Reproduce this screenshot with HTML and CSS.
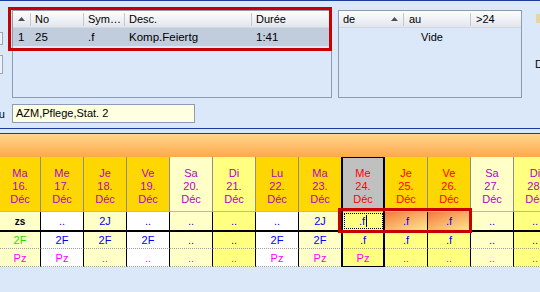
FILE: index.html
```html
<!DOCTYPE html>
<html lang="fr">
<head>
  <meta charset="UTF-8" />
  <title>Planning</title>
  <link rel="stylesheet" href="styles.css">
</head>
<body>

  <div class="topline"></div>

  <!-- Zone du haut : listes -->
  <div class="top">
    <div class="top-row">
      <div class="side-left">
        <div class="stub stub-a"></div>
        <div class="stub stub-b"></div>
      </div>

      <div class="list list-main">
        <div class="list-head">
          <div class="col c-sort"><svg width="7" height="4" viewBox="0 0 7 4"><polygon points="0,4 3.5,0 7,4" fill="#4a4f58"/></svg></div>
          <div class="col c-no sep">No</div>
          <div class="col c-sym sep">Sym…</div>
          <div class="col c-desc sep">Desc.</div>
          <div class="col c-dur sep">Durée</div>
        </div>
        <div class="list-row selected">
          <div class="col c-sort">1</div>
          <div class="col c-no">25</div>
          <div class="col c-sym">.f</div>
          <div class="col c-desc">Komp.Feiertg</div>
          <div class="col c-dur">1:41</div>
        </div>
      </div>

      <div class="list list-range">
        <div class="list-head">
          <div class="col c-de">de <svg width="7" height="4" viewBox="0 0 7 4"><polygon points="0,4 3.5,0 7,4" fill="#4a4f58"/></svg></div>
          <div class="col c-au sep">au</div>
          <div class="col c-gt sep">&gt;24</div>
        </div>
        <div class="empty">Vide</div>
      </div>

      <div class="side-right">
        <div class="icon-stub"></div>
        <div class="clip"><span>Du</span></div>
      </div>
    </div>

    <div class="note-row">
      <div class="clip clip-left"><span>au</span></div>
      <div class="note">AZM,Pflege,Stat. 2</div>
    </div>

    <div class="mark mark-list"></div>
  </div>

  <div class="blueline"></div>
  <div class="gap"></div>
  <div class="blueline"></div>
  <div class="band"></div>

  <!-- Planning -->
  <div class="sched">
    <div class="grid">
      <div class="hd wk">Ma<br>16.<br>Déc</div>
      <div class="hd wk">Me<br>17.<br>Déc</div>
      <div class="hd wk">Je<br>18.<br>Déc</div>
      <div class="hd wk">Ve<br>19.<br>Déc</div>
      <div class="hd sa">Sa<br>20.<br>Déc</div>
      <div class="hd di">Di<br>21.<br>Déc</div>
      <div class="hd wk">Lu<br>22.<br>Déc</div>
      <div class="hd wk">Ma<br>23.<br>Déc</div>
      <div class="hd cur red">Me<br>24.<br>Déc</div>
      <div class="hd wk red">Je<br>25.<br>Déc</div>
      <div class="hd wk red">Ve<br>26.<br>Déc</div>
      <div class="hd sa">Sa<br>27.<br>Déc</div>
      <div class="hd di">Di<br>28.<br>Déc</div>

      <div class="cell r1 lt blk">zs</div>
      <div class="cell r1 wh">..</div>
      <div class="cell r1 lt">2J</div>
      <div class="cell r1 wh">..</div>
      <div class="cell r1 lt">..</div>
      <div class="cell r1 ye">..</div>
      <div class="cell r1 wh">..</div>
      <div class="cell r1 lt">2J</div>
      <div class="cell r1 ye"><span class="focus">.f<i class="caret"></i></span></div>
      <div class="cell r1 hot">.f</div>
      <div class="cell r1 hot">.f</div>
      <div class="cell r1 lt">..</div>
      <div class="cell r1 ye">..</div>

      <div class="cell r2 lt grn">2F</div>
      <div class="cell r2 wh">2F</div>
      <div class="cell r2 lt">2F</div>
      <div class="cell r2 wh">2F</div>
      <div class="cell r2 lt">..</div>
      <div class="cell r2 ye">..</div>
      <div class="cell r2 wh">2F</div>
      <div class="cell r2 lt">2F</div>
      <div class="cell r2 ye">.f</div>
      <div class="cell r2 ye">.f</div>
      <div class="cell r2 ye">.f</div>
      <div class="cell r2 lt">..</div>
      <div class="cell r2 ye">..</div>

      <div class="cell r3 lt">Pz</div>
      <div class="cell r3 wh">Pz</div>
      <div class="cell r3 lt">..</div>
      <div class="cell r3 wh">..</div>
      <div class="cell r3 lt">..</div>
      <div class="cell r3 ye">..</div>
      <div class="cell r3 wh">Pz</div>
      <div class="cell r3 lt">Pz</div>
      <div class="cell r3 ye">Pz</div>
      <div class="cell r3 ye">..</div>
      <div class="cell r3 ye">..</div>
      <div class="cell r3 lt">..</div>
      <div class="cell r3 ye">..</div>
    </div>

    <div class="sel-col"></div>
    <div class="mark mark-grid"></div>
  </div>

</body>
</html>
```

FILE: styles.css
```css
/* === BASE === */
* { margin: 0; padding: 0; box-sizing: border-box; }

:root {
  --bg: #dae8f9;
  --navy: #1e3d9b;
  --frame: #8c9cb2;
  --mark: #c80000;
  --gold: #ffd700;
  --cream: #ffffc8;
  --yellow: #ffff80;
}

body {
  width: 540px;
  height: 292px;
  overflow: hidden;
  background: var(--bg);
  font-family: 'Liberation Sans', Arial, sans-serif;
  font-size: 11px;
  color: #000;
}

.topline { height: 1px; background: var(--navy); }

/* === ZONE DU HAUT === */
.top {
  position: relative;
  height: 127px;
  padding-top: 9px;
}

.top-row { display: flex; height: 88px; }

.side-left {
  width: 12px;
  display: flex;
  flex-direction: column;
}

.stub {
  width: 3px;
  background: #eef2f6;
  border: 1px solid #9aa6b6;
  border-left: none;
}
.stub-a { height: 13px; margin-top: 22px; }
.stub-b { height: 19px; margin-top: 10px; }

.list {
  height: 88px;
  border: 1px solid var(--frame);
}
.list-main { width: 320px; }
.list-range { width: 184px; margin-left: 6px; }

.list-head {
  display: flex;
  align-items: center;
  height: 17px;
  background: linear-gradient(#fdfdfe, #e2e6ec);
  border-bottom: 1px solid #d2d8e0;
}

.col {
  height: 13px;
  line-height: 13px;
  padding-left: 4px;
  white-space: nowrap;
  border-left: 1px solid transparent;
}
.list-head .sep { border-left-color: #c3c8d0; }

.c-sort { width: 17px; padding-left: 5px; border-left: none; }
.c-sort svg { margin-bottom: 2px; }
.c-no { width: 53px; }
.c-sym { width: 41px; }
.c-desc { width: 127px; }
.c-dur { flex: 1; }

.c-de { width: 64px; border-left: none; display: flex; align-items: center; }
.c-de svg { margin-left: auto; margin-right: 5px; }
.c-au { width: 67px; padding-left: 5px; }
.c-gt { flex: 1; padding-left: 5px; }

.list-row {
  display: flex;
  align-items: center;
  height: 18px;
}
.list-row .col { font-size: 11.5px; }
.list-row.selected { background: #c1ccdd; }

.empty {
  text-align: center;
  padding-top: 3px;
  padding-left: 4px;
}

.side-right {
  margin-left: 13px;
  width: 5px;
  overflow: hidden;
}

.icon-stub {
  width: 8px;
  height: 9px;
  margin: 4px 0 0 1px;
  background: #e6d6a4;
}

.clip {
  display: flex;
  justify-content: flex-end;
  overflow: hidden;
  white-space: nowrap;
}
.side-right .clip { width: 12px; margin-top: 35px; justify-content: flex-start; }

.note-row {
  display: flex;
  align-items: center;
  margin-top: 6px;
}

.clip-left { width: 12px; }
.clip-left span { margin-right: 7px; }

.note {
  width: 183px;
  height: 19px;
  line-height: 17px;
  padding-left: 3px;
  background: #ffffe1;
  border: 1px solid var(--frame);
}

.mark {
  position: absolute;
  border: 3px solid var(--mark);
}
.mark-list { left: 8px; top: 6px; width: 324px; height: 44px; }

.blueline { height: 1px; background: var(--navy); }
.gap { height: 4px; }

.band {
  height: 23px;
  background: linear-gradient(#ffd68c, #ffa84c);
}

/* === PLANNING === */
.sched {
  position: relative;
  width: 540px;
  overflow: hidden;
}

.grid {
  display: grid;
  grid-template-columns: 41px repeat(12, 43px);
  width: 557px;
}

.hd {
  height: 55px;
  padding-top: 10px;
  line-height: 13px;
  text-align: center;
  color: #b400c8;
  border-right: 1px solid #8e8e8e;
  border-bottom: 1px solid #b8b8b8;
}
.hd.wk { background: var(--gold); }
.hd.sa { background: var(--cream); }
.hd.di { background: var(--yellow); }
.hd.cur { background: #c0c0c0; }
.hd.red { color: #ff0000; }

.cell {
  display: flex;
  align-items: center;
  justify-content: center;
  color: #0000ff;
  border-right: 1px solid #000;
}
.cell.r1 { height: 20px; border-bottom: 2px solid #000; }
.cell.r2 { height: 17px; border-bottom: 1px dotted #a0a0a0; }
.cell.r3 { height: 18px; border-bottom: 1px dotted #a0a0a0; color: #ff00ff; }

.cell.lt { background: var(--cream); }
.cell.wh { background: #fff; }
.cell.ye { background: var(--yellow); }
.cell.hot { background: linear-gradient(160deg, #f47a3c 0%, #fbb066 50%, #ffe58e 100%); }
.cell.blk { color: #000; font-weight: bold; font-size: 10px; }
.cell.grn { color: #22dd00; }

.focus {
  display: flex;
  align-items: center;
  justify-content: center;
  width: 39px;
  height: 16px;
  border: 1px dotted #000;
}
.caret {
  width: 1px;
  height: 12px;
  margin-left: 1px;
  background: #000;
}

.sel-col {
  position: absolute;
  left: 341px;
  top: -1px;
  width: 44px;
  height: 112px;
  border: 2px solid #000;
}

.mark-grid { left: 338px; top: 51px; width: 134px; height: 25px; }
```
